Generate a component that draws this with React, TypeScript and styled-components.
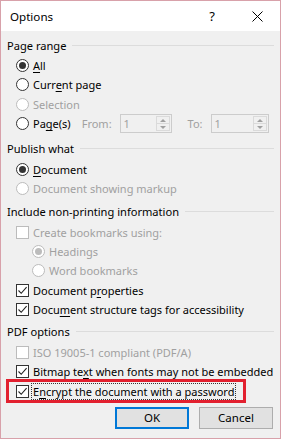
import React from 'react';
import styled, { createGlobalStyle, css } from 'styled-components';

const GlobalStyle = createGlobalStyle`
  html, body {
    margin: 0;
    padding: 0;
    background: #f0f0f0;
  }
  body {
    font-family: 'Noto Sans', 'Open Sans', sans-serif;
    font-size: 11px;
    color: #000;
  }
`;

const Window = styled.div`
  width: 281px;
  height: 439px;
  box-sizing: border-box;
  border: 1px solid #d8a1aa;
  background: #f0f0f0;
  display: flex;
  flex-direction: column;
`;

const TitleBar = styled.div`
  height: 30px;
  background: #fff;
  display: flex;
  align-items: center;
  padding-left: 9px;
  flex-shrink: 0;
`;

const Title = styled.div`
  flex: 1;
  font-size: 11.6px;
  margin-top: 1px;
`;

const HelpButton = styled.div`
  width: 14px;
  font-size: 13px;
  text-align: center;
  margin-right: 32px;
`;

const CloseButton = styled.div`
  width: 12px;
  height: 12px;
  margin-right: 17px;
  display: flex;
  align-items: center;
  justify-content: center;
`;

const Body = styled.div`
  padding: 4px 6px 0 6px;
  display: flex;
  flex-direction: column;
`;

const Group = styled.div<{ $top?: number }>`
  display: flex;
  flex-direction: column;
  margin-top: ${(p) => p.$top ?? 0}px;
`;

const GroupHeader = styled.div`
  height: 20px;
  display: flex;
  align-items: center;
  gap: 6px;
  margin-bottom: 1px;
  font-size: 11.1px;
  &::after {
    content: '';
    flex: 1;
    height: 1px;
    background: #dcdcdc;
  }
`;

const Row = styled.div<{ $indent?: number; $height?: number; $highlight?: boolean }>`
  height: ${(p) => p.$height ?? 19.3}px;
  flex-shrink: 0;
  display: flex;
  align-items: center;
  padding-left: ${(p) => 9 + (p.$indent ?? 0)}px;
  position: relative;
  ${(p) =>
    p.$highlight &&
    css`
      &::before {
        content: '';
        position: absolute;
        left: -1px;
        top: -2.5px;
        width: 240px;
        height: 24px;
        box-sizing: border-box;
        border: 3px solid #e2202f;
        pointer-events: none;
      }
    `}
`;

const Label = styled.span<{ $disabled?: boolean; $focus?: boolean }>`
  margin-left: 2px;
  color: ${(p) => (p.$disabled ? '#a0a0a0' : '#000')};
  white-space: nowrap;
  line-height: 15px;
  padding: 0 1px;
  border: 1px dotted ${(p) => (p.$focus ? '#333' : 'transparent')};
  u {
    text-decoration-thickness: 1px;
    text-underline-offset: 2px;
  }
`;

const RadioCircle = styled.span<{ $disabled?: boolean; $checked?: boolean }>`
  width: 13px;
  height: 13px;
  box-sizing: border-box;
  border-radius: 50%;
  border: 1px solid ${(p) => (p.$disabled ? '#bcbcbc' : '#333')};
  background: #fff;
  display: flex;
  align-items: center;
  justify-content: center;
  flex-shrink: 0;
  &::after {
    content: '';
    width: 7px;
    height: 7px;
    border-radius: 50%;
    background: ${(p) => (p.$disabled ? '#bcbcbc' : '#333')};
    display: ${(p) => (p.$checked ? 'block' : 'none')};
  }
`;

const CheckBox = styled.span<{ $disabled?: boolean }>`
  width: 13px;
  height: 13px;
  box-sizing: border-box;
  border: 1px solid ${(p) => (p.$disabled ? '#bcbcbc' : '#333')};
  background: #fff;
  display: flex;
  align-items: center;
  justify-content: center;
  flex-shrink: 0;
`;

const SpinLabel = styled.span<{ $left: number }>`
  color: #a0a0a0;
  margin-left: ${(p) => p.$left}px;
`;

const Spinner = styled.div<{ $width: number; $left: number }>`
  width: ${(p) => p.$width}px;
  height: 19px;
  box-sizing: border-box;
  border: 1px solid #cccccc;
  background: #f0f0f0;
  margin-left: ${(p) => p.$left}px;
  display: flex;
  align-items: center;
`;

const SpinValue = styled.span`
  flex: 1;
  color: #a0a0a0;
  padding-left: 3px;
`;

const SpinButtons = styled.div`
  width: 14px;
  height: 15px;
  margin-right: 1px;
  box-sizing: border-box;
  border: 1px solid #dadada;
  display: flex;
  flex-direction: column;
`;

const SpinHalf = styled.div<{ $down?: boolean }>`
  flex: 1;
  display: flex;
  align-items: center;
  justify-content: center;
  ${(p) => p.$down && 'border-top: 1px solid #dadada;'}
  &::after {
    content: '';
    width: 0;
    height: 0;
    border-left: 3px solid transparent;
    border-right: 3px solid transparent;
    ${(p) =>
      p.$down
        ? 'border-top: 3px solid #a0a0a0;'
        : 'border-bottom: 3px solid #a0a0a0;'}
  }
`;

const ButtonBar = styled.div`
  display: flex;
  justify-content: flex-end;
  gap: 10px;
  margin-top: 6px;
  padding-right: 1px;
`;

const Button = styled.button<{ $primary?: boolean }>`
  width: 74px;
  height: 22px;
  box-sizing: border-box;
  background: #e1e1e1;
  border: ${(p) => (p.$primary ? '2px solid #0078d7' : '1px solid #adadad')};
  font-family: inherit;
  font-size: 11.5px;
  color: #000;
  padding: 0;
`;

const Check = () => (
  <svg width="11" height="11" viewBox="0 0 11 11">
    <path d="M1.5 5.5 L4.2 8.3 L9.6 2.2" fill="none" stroke="#222" strokeWidth="1.1" />
  </svg>
);

const Radio = ({
  checked,
  disabled,
  indent,
  children,
}: {
  checked?: boolean;
  disabled?: boolean;
  indent?: number;
  children: React.ReactNode;
}) => (
  <Row $indent={indent}>
    <RadioCircle $checked={checked} $disabled={disabled} />
    <Label $disabled={disabled}>{children}</Label>
  </Row>
);

const Checkbox = ({
  checked,
  disabled,
  focus,
  highlight,
  children,
}: {
  checked?: boolean;
  disabled?: boolean;
  focus?: boolean;
  highlight?: boolean;
  children: React.ReactNode;
}) => (
  <Row $highlight={highlight}>
    <CheckBox $disabled={disabled}>{checked && <Check />}</CheckBox>
    <Label $disabled={disabled} $focus={focus}>
      {children}
    </Label>
  </Row>
);

export default function App() {
  return (
    <>
      <GlobalStyle />
      <Window>
        <TitleBar>
          <Title>Options</Title>
          <HelpButton>?</HelpButton>
          <CloseButton>
            <svg width="11" height="11" viewBox="0 0 11 11">
              <path d="M0.5 0.5 L10.5 10.5 M10.5 0.5 L0.5 10.5" stroke="#000" strokeWidth="1" />
            </svg>
          </CloseButton>
        </TitleBar>
        <Body>
          <Group>
            <GroupHeader>Page range</GroupHeader>
            <Radio checked>
              <u>A</u>ll
            </Radio>
            <Radio>
              Curr<u>e</u>nt page
            </Radio>
            <Radio disabled>Selection</Radio>
            <Row $height={20}>
              <RadioCircle />
              <Label>
                Pa<u>g</u>e(s)
              </Label>
              <SpinLabel $left={9}>From:</SpinLabel>
              <Spinner $width={52} $left={8}>
                <SpinValue>1</SpinValue>
                <SpinButtons>
                  <SpinHalf />
                  <SpinHalf $down />
                </SpinButtons>
              </Spinner>
              <SpinLabel $left={16}>To:</SpinLabel>
              <Spinner $width={58} $left={8}>
                <SpinValue>1</SpinValue>
                <SpinButtons>
                  <SpinHalf />
                  <SpinHalf $down />
                </SpinButtons>
              </Spinner>
            </Row>
          </Group>

          <Group $top={5}>
            <GroupHeader>Publish what</GroupHeader>
            <Radio checked>
              <u>D</u>ocument
            </Radio>
            <Radio disabled>Document showing markup</Radio>
          </Group>

          <Group $top={3}>
            <GroupHeader>Include non-printing information</GroupHeader>
            <Checkbox disabled>Create bookmarks using:</Checkbox>
            <Radio disabled checked indent={16}>
              Headings
            </Radio>
            <Radio disabled indent={16}>
              Word bookmarks
            </Radio>
            <Checkbox checked>
              Document p<u>r</u>operties
            </Checkbox>
            <Checkbox checked>
              Docu<u>m</u>ent structure tags for accessibility
            </Checkbox>
          </Group>

          <Group $top={3}>
            <GroupHeader>PDF options</GroupHeader>
            <Checkbox disabled>ISO 19005-1 compliant (PDF/A)</Checkbox>
            <Checkbox checked>
              Bitmap te<u>x</u>t when fonts may not be embedded
            </Checkbox>
            <Checkbox checked focus highlight>
              E<u>n</u>crypt the document with a password
            </Checkbox>
          </Group>

          <ButtonBar>
            <Button $primary>OK</Button>
            <Button>Cancel</Button>
          </ButtonBar>
        </Body>
      </Window>
    </>
  );
}
